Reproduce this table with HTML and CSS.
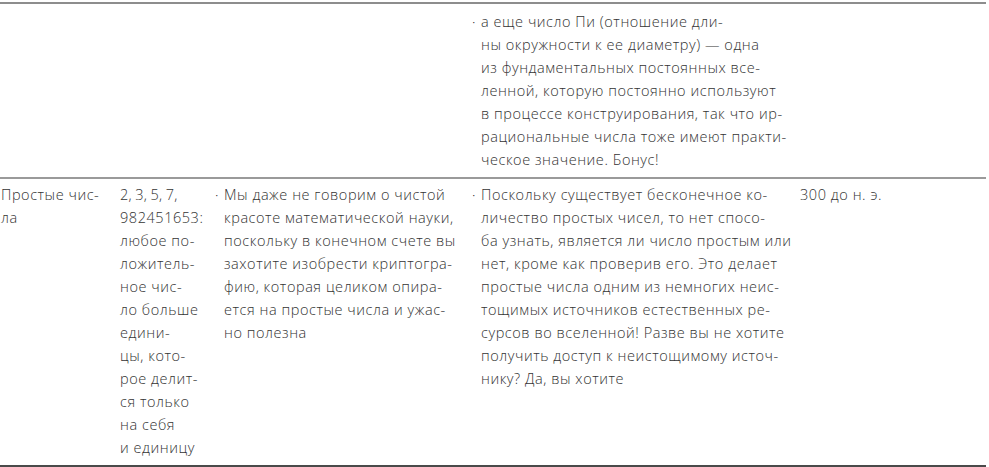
FILE: index.html
```html
<!DOCTYPE html>
<html lang="ru">
<head>
<meta charset="utf-8">
<title>Числа</title>
<link rel="stylesheet" href="styles.css">
</head>
<body>
<div class="page">
<table class="facts">
  <colgroup>
    <col class="c-name">
    <col class="c-def">
    <col class="c-why">
    <col class="c-more">
    <col class="c-date">
  </colgroup>
  <tbody>
    <tr class="row row-first">
      <td></td>
      <td></td>
      <td></td>
      <td>
        <div class="item"><span class="dot">·</span><span class="txt">а еще число Пи (отношение дли-<br>ны окружности к ее диаметру) — одна<br>из фундаментальных постоянных все-<br>ленной, которую постоянно используют<br>в процессе конструирования, так что ир-<br>рациональные числа тоже имеют практи-<br>ческое значение. Бонус!</span></div>
      </td>
      <td></td>
    </tr>
    <tr class="row row-last">
      <td class="name">Простые чис-<br>ла</td>
      <td><span class="nums">2, 3, 5, 7,</span><br>982451653:<br>любое по-<br>ложитель-<br>ное чис-<br>ло больше<br>едини-<br>цы, кото-<br>рое делит-<br>ся только<br>на себя<br>и единицу</td>
      <td>
        <div class="item"><span class="dot">·</span><span class="txt">Мы даже не говорим о чистой<br>красоте математической науки,<br>поскольку в конечном счете вы<br>захотите изобрести криптогра-<br>фию, которая целиком опира-<br>ется на простые числа и ужас-<br>но полезна</span></div>
      </td>
      <td>
        <div class="item"><span class="dot">·</span><span class="txt">Поскольку существует бесконечное ко-<br>личество простых чисел, то нет спосо-<br>ба узнать, является ли число простым или<br>нет, кроме как проверив его. Это делает<br>простые числа одним из немногих неис-<br>тощимых источников естественных ре-<br>сурсов во вселенной! Разве вы не хотите<br>получить доступ к неистощимому источ-<br>нику? Да, вы хотите</span></div>
      </td>
      <td>300 до н. э.</td>
    </tr>
  </tbody>
</table>
</div>
</body>
</html>
```

FILE: styles.css
```css
html, body {
  margin: 0;
  padding: 0;
  background: #ffffff;
}

.page {
  padding-top: 2px;
  width: 986px;
}

.facts {
  width: 986px;
  table-layout: fixed;
  border-collapse: collapse;
  font-family: "Open Sans", "Liberation Sans", sans-serif;
  font-weight: 300;
  font-size: 14.5px;
  line-height: 23px;
  letter-spacing: 0.55px;
  color: #333333;
}

.c-name { width: 120px; }
.c-def { width: 95px; }
.c-why { width: 257px; }
.c-more { width: 328px; }
.c-date { width: 186px; }

.facts td {
  vertical-align: top;
  padding: 0;
  white-space: nowrap;
}

.facts td.name {
  padding-left: 1px;
}

.nums {
  letter-spacing: 0.2px;
  word-spacing: -0.5px;
}

.row-first td {
  border-top: 2px solid #8d8d8d;
  padding-top: 6px;
  padding-bottom: 6px;
}

.row-last td {
  border-top: 2px solid #9a9a9a;
  border-bottom: 2px solid #4a4a4a;
  padding-top: 4px;
  padding-bottom: 6px;
}

.item {
  display: flex;
}

.dot {
  flex: 0 0 9px;
  width: 9px;
  letter-spacing: 0;
}

.txt {
  flex: 1 1 auto;
}
```
